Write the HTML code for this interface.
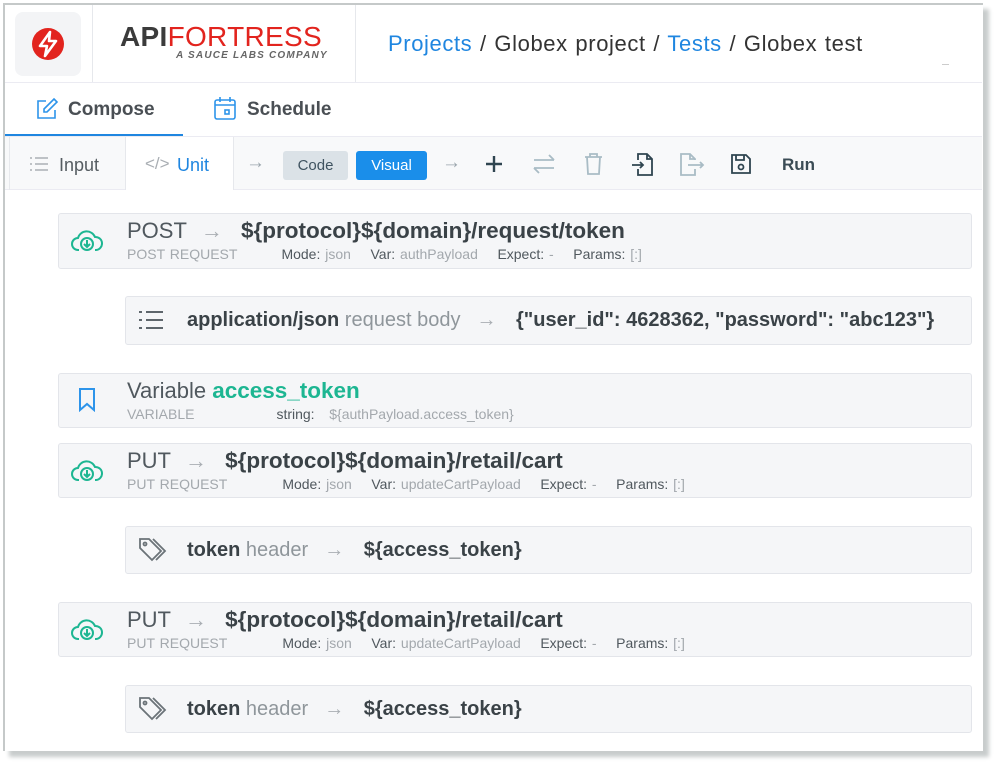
<!DOCTYPE html>
<html><head><meta charset="utf-8"><style>
*{box-sizing:border-box;margin:0;padding:0}
body{width:994px;height:762px;background:#fff;font-family:"Liberation Sans",sans-serif;position:relative;overflow:hidden}
.frame{position:absolute;left:3px;top:3px;width:980px;height:748px;border:2px solid #c5c9c9;border-right:none;border-bottom:none;background:#fff;box-shadow:6px 6px 4px #c8cccc}
.abs{position:absolute}
.card{position:absolute;left:58px;width:914px;background:#f5f6f8;border:1px solid #e3e5ea;border-radius:3px}
.sub{left:125px;width:847px}
.t{position:absolute;left:68px;top:4px;font-size:22px;color:#50585e;white-space:nowrap}
.t b{color:#3a4247;font-size:22.5px}
.ar{color:#a9aeb3;margin:0 12px 0 14px}
.m{position:absolute;left:68px;top:32px;font-size:14px;color:#a3a8ad;white-space:nowrap;word-spacing:1px}
.m span{color:#50585e}
.s{position:absolute;left:61px;top:12px;font-size:20px;color:#8f969b;white-space:nowrap}
.s b{color:#3a4247}
.s .ar{margin:0 14px 0 16px}
.ic{position:absolute;left:12px;top:14px}
</style></head><body>
<div class="frame"></div>
<div class="abs" style="left:15px;top:12px;width:66px;height:64px;background:#f3f4f6;border-radius:8px"></div>
<svg class="abs" style="left:31px;top:27px" width="34" height="34" viewBox="0 0 34 34"><circle cx="17" cy="17" r="16" fill="#e2241e"/><path d="M19 5 L9 19 H16 L14 29 L25 14 H18 Z" fill="none" stroke="#fff" stroke-width="2.6" stroke-linejoin="round"/></svg>
<div class="abs" style="left:92px;top:5px;width:1px;height:77px;background:#e6e8ec"></div>
<div class="abs" style="left:355px;top:5px;width:1px;height:77px;background:#e6e8ec"></div>
<div class="abs" style="left:120px;top:21px;font-size:28px;letter-spacing:0.3px;white-space:nowrap"><b style="color:#3b3b3b">API</b><span style="color:#e2241e">FORTRESS</span></div>
<div class="abs" style="left:176px;top:50px;font-size:10px;font-weight:bold;font-style:italic;color:#666;letter-spacing:1.2px">A SAUCE LABS COMPANY</div>
<div class="abs" style="left:388px;top:31px;font-size:22px;letter-spacing:0.6px;word-spacing:1px;color:#333;white-space:nowrap"><span style="color:#1f86e0">Projects</span> / Globex project / <span style="color:#1f86e0">Tests</span> / Globex test</div>
<div class="abs" style="left:942px;top:64px;width:7px;height:1px;background:#ccc"></div>
<div class="abs" style="left:5px;top:82px;width:977px;height:1px;background:#ebebf2"></div>
<svg class="abs" style="left:35px;top:97px" width="24" height="24" viewBox="0 0 24 24" fill="none" stroke="#2d94ea" stroke-width="1.6"><path d="M11 4H3v17h17v-8"/><path d="M19 2l3 3-10 10H9v-3z"/></svg>
<div class="abs" style="left:68px;top:99px;font-size:19px;font-weight:bold;color:#4a4f54">Compose</div>
<svg class="abs" style="left:213px;top:96px" width="24" height="25" viewBox="0 0 24 25" fill="none" stroke="#2d94ea" stroke-width="1.6"><rect x="2" y="4" width="20" height="19" rx="2"/><path d="M2 9h20M7 1v5M17 1v5"/><rect x="12" y="14" width="4" height="4"/></svg>
<div class="abs" style="left:247px;top:99px;font-size:19px;font-weight:bold;color:#4a4f54">Schedule</div>
<div class="abs" style="left:5px;top:134px;width:178px;height:3px;background:#1f86e0"></div>
<div class="abs" style="left:5px;top:136px;width:977px;height:1px;background:#ebebf2"></div>
<div class="abs" style="left:5px;top:137px;width:977px;height:53px;background:#f8f9fa;border-bottom:1px solid #ebebf2"></div>
<div class="abs" style="left:9px;top:137px;width:1px;height:53px;background:#e6e8ec"></div>
<div class="abs" style="left:125px;top:137px;width:109px;height:53px;background:#fff;border-left:1px solid #e6e8ec;border-right:1px solid #e6e8ec"></div>
<svg class="abs" style="left:29px;top:156px" width="20" height="16" viewBox="0 0 20 16" stroke="#aab0b5" stroke-width="1.6"><path d="M1 2h2M6 2h13M1 8h2M6 8h13M1 14h2M6 14h13"/></svg>
<div class="abs" style="left:59px;top:155px;font-size:18px;color:#555c61">Input</div>
<div class="abs" style="left:145px;top:154px;font-size:17px;color:#a9aeb3">&lt;/&gt;</div>
<div class="abs" style="left:177px;top:155px;font-size:18px;color:#1f86e0">Unit</div>
<div class="abs" style="left:246px;top:152px;font-size:19px;color:#9aa5ac">→</div>
<div class="abs" style="left:283px;top:151px;width:65px;height:29px;background:#dbe2e7;border-radius:3px;font-size:15px;color:#3f5360;text-align:center;line-height:29px">Code</div>
<div class="abs" style="left:356px;top:151px;width:71px;height:29px;background:#1a8eea;border-radius:3px;font-size:15px;color:#fff;text-align:center;line-height:29px">Visual</div>
<div class="abs" style="left:442px;top:152px;font-size:19px;color:#9aa5ac">→</div>
<svg class="abs" style="left:485px;top:155px" width="18" height="18" stroke="#2f4550" stroke-width="2.4"><path d="M9 1v16M1 9h16"/></svg>
<svg class="abs" style="left:532px;top:154px" width="24" height="20" fill="none" stroke="#a9bcc5" stroke-width="1.8"><path d="M2 6h20M17 1l5 5M22 14H2M7 19l-5-5"/></svg>
<svg class="abs" style="left:584px;top:152px" width="19" height="23" fill="none" stroke="#a9bcc5" stroke-width="1.8"><path d="M1 5h17M6 5V2h7v3M3 5l1 17h11l1-17"/></svg>
<svg class="abs" style="left:631px;top:152px" width="24" height="24" fill="none" stroke="#2f4550" stroke-width="1.8"><path d="M7 8V2h9l5 5v16H7v-6M16 2v5h5M1 13h11M9 10l3 3-3 3"/></svg>
<svg class="abs" style="left:679px;top:152px" width="26" height="24" fill="none" stroke="#a9bcc5" stroke-width="1.8"><path d="M16 8V7l-5-5H2v21h14v-6M11 2v5h5M9 13h15M21 10l3 3-3 3"/></svg>
<svg class="abs" style="left:730px;top:153px" width="22" height="22" fill="none" stroke="#2f4550" stroke-width="1.8"><path d="M2 2h14l4 4v14H2z M6 2v5h8V2"/><circle cx="11" cy="14" r="2.5"/></svg>
<div class="abs" style="left:782px;top:155px;font-size:17px;font-weight:bold;color:#3b4c55">Run</div>

<div class="card" style="top:213px;height:56px">
<svg class="ic" width="32" height="26" viewBox="0 0 32 26" fill="none" stroke="#1db692" stroke-width="2"><path d="M8 22H7a6 6 0 0 1 0-12 9 9 0 0 1 17-1 6.5 6.5 0 0 1 1 13h-1"/><circle cx="16" cy="16" r="6"/><path d="M16 12v7M13 16l3 3 3-3"/></svg>
<div class="t">POST<span class="ar">→</span> <b>${protocol}${domain}/request/token</b></div>
<div class="m">POST REQUEST<span style="margin-left:44px">Mode:</span> json &nbsp;&nbsp; <span>Var:</span> authPayload &nbsp;&nbsp; <span>Expect:</span> - &nbsp;&nbsp; <span>Params:</span> [:]</div>
</div>
<div class="card sub" style="top:296px;height:49px">
<svg class="ic" style="top:13px" width="26" height="20" stroke="#5e666c" stroke-width="2"><path d="M1 2h3M8 2h17M1 10h3M8 10h17M1 18h3M8 18h17"/></svg>
<div class="s"><b>application/json</b> request body<span class="ar">→</span> <b>{"user_id": 4628362, "password": "abc123"}</b></div>
</div>
<div class="card" style="top:373px;height:55px">
<svg class="ic" style="left:19px" width="18" height="24" fill="none" stroke="#2d94ea" stroke-width="2"><path d="M2 1h14v21l-7-6-7 6z"/></svg>
<div class="t">Variable <b style="color:#1db692">access_token</b></div>
<div class="m">VARIABLE<span style="margin-left:82px">string:</span> &nbsp; ${authPayload.access_token}</div>
</div>
<div class="card" style="top:443px;height:55px">
<svg class="ic" width="32" height="26" viewBox="0 0 32 26" fill="none" stroke="#1db692" stroke-width="2"><path d="M8 22H7a6 6 0 0 1 0-12 9 9 0 0 1 17-1 6.5 6.5 0 0 1 1 13h-1"/><circle cx="16" cy="16" r="6"/><path d="M16 12v7M13 16l3 3 3-3"/></svg>
<div class="t">PUT<span class="ar">→</span> <b>${protocol}${domain}/retail/cart</b></div>
<div class="m">PUT REQUEST<span style="margin-left:55px">Mode:</span> json &nbsp;&nbsp; <span>Var:</span> updateCartPayload &nbsp;&nbsp; <span>Expect:</span> - &nbsp;&nbsp; <span>Params:</span> [:]</div>
</div>
<div class="card sub" style="top:526px;height:48px">
<svg class="ic" style="top:10px" width="32" height="26" fill="none" stroke="#6b7378" stroke-width="1.8"><path d="M2 2h9l12 12-9 9L2 11z"/><circle cx="7" cy="7" r="1.5"/><path d="M15 2l12 12-9 9"/></svg>
<div class="s"><b>token</b> header<span class="ar">→</span> <b>${access_token}</b></div>
</div>
<div class="card" style="top:602px;height:55px">
<svg class="ic" width="32" height="26" viewBox="0 0 32 26" fill="none" stroke="#1db692" stroke-width="2"><path d="M8 22H7a6 6 0 0 1 0-12 9 9 0 0 1 17-1 6.5 6.5 0 0 1 1 13h-1"/><circle cx="16" cy="16" r="6"/><path d="M16 12v7M13 16l3 3 3-3"/></svg>
<div class="t">PUT<span class="ar">→</span> <b>${protocol}${domain}/retail/cart</b></div>
<div class="m">PUT REQUEST<span style="margin-left:55px">Mode:</span> json &nbsp;&nbsp; <span>Var:</span> updateCartPayload &nbsp;&nbsp; <span>Expect:</span> - &nbsp;&nbsp; <span>Params:</span> [:]</div>
</div>
<div class="card sub" style="top:685px;height:48px">
<svg class="ic" style="top:10px" width="32" height="26" fill="none" stroke="#6b7378" stroke-width="1.8"><path d="M2 2h9l12 12-9 9L2 11z"/><circle cx="7" cy="7" r="1.5"/><path d="M15 2l12 12-9 9"/></svg>
<div class="s"><b>token</b> header<span class="ar">→</span> <b>${access_token}</b></div>
</div>
</body></html>
